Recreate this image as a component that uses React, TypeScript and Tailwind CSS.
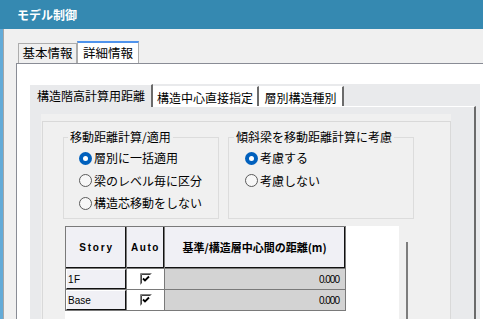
import React from "react";

function Radio({ checked, label, h }: { checked?: boolean; label: string; h: string }) {
  return (
    <div className={`flex items-center ${h}`}>
      {checked ? (
        <div className="w-[13px] h-[13px] rounded-full bg-[#0060bd] flex items-center justify-center shrink-0">
          <div className="w-[5px] h-[5px] rounded-full bg-white" />
        </div>
      ) : (
        <div className="w-[13px] h-[13px] rounded-full border border-[#5a5a5a] bg-[#f7f7f7] shrink-0" />
      )}
      <span className="ml-[2px] leading-[14px] whitespace-nowrap">{label}</span>
    </div>
  );
}

function Check() {
  return (
    <svg width="12" height="12" viewBox="0 0 12 12">
      <rect x="0" y="0" width="12" height="12" fill="#ffffff" />
      <path d="M0.5 11.5V0.5H11.5" stroke="#808080" fill="none" />
      <path d="M1.5 10.5V1.5H10.5" stroke="#404040" fill="none" />
      <path d="M3 5.5L5 7.5L9 3.5" stroke="#000" strokeWidth="1.8" fill="none" />
    </svg>
  );
}

export default function App() {
  return (
    <div className="w-[483px] h-[319px] overflow-hidden bg-[#f0f0f0] font-['Noto_Sans_CJK_JP',sans-serif] text-[12px] text-black">
      <div className="h-[29px] bg-[#3589b1] flex items-center pl-[17px] text-white font-bold text-[12px] leading-none">
        モデル制御
      </div>
      <div className="flex h-[290px]">
        <div className="w-[3px] bg-[#63abd8]" />
        <div className="w-px bg-[#a6a6a6]" />
        <div className="flex-1 flex flex-col pt-[12px] pl-[12px]">
          <div className="flex items-end h-[22px] pl-[2px]">
            <div className="h-[20px] w-[59px] border border-b-0 border-[#adadad] bg-[#f0f0f0] flex items-center justify-center leading-none text-[12.5px]">
              基本情報
            </div>
            <div className="h-[22px] w-[62px] border-x border-[#adadad] border-t-2 border-t-[#4f93ec] bg-white flex items-center justify-center leading-none text-[12.5px]">
              詳細情報
            </div>
          </div>
          <div className="flex-1 border-t border-l border-[#898c95] bg-white pt-[20px] pl-[13px] flex flex-col">
            <div className="w-[450px] flex-1 bg-[#e9eaec] flex flex-col">
              <div className="flex h-[22px] items-end">
                <div className="relative z-10 -mb-px h-[23px] w-[123px] bg-[#e9eaec] border-t border-white border-r-2 border-r-[#6b6b6b] pl-[7px] flex items-center leading-none">
                  構造階高計算用距離
                </div>
                <div className="h-[20px] w-[106px] bg-white border-t border-white border-r-2 border-r-[#6b6b6b] flex items-center justify-center leading-none pt-[2px]">
                  構造中心直接指定
                </div>
                <div className="h-[20px] w-[85px] bg-white border-t border-white border-r-2 border-r-[#6b6b6b] flex items-center justify-center leading-none pt-[2px]">
                  層別構造種別
                </div>
              </div>
              <div className="w-[446px] flex-1 border-t border-white border-r-2 border-r-[#6b6b6b] pt-[7px] pl-[11px] flex flex-col">
                <div className="w-[410px] flex-1 bg-[#f0f0f0] pt-[7px] pl-px flex flex-col">
                  <div className="flex-1 border-t border-l border-r border-[#d9d9d9] flex flex-col pl-[20px]">
                    <div className="flex gap-[9px] mt-[8px]">
                      <fieldset className="w-[156px] h-[89px] border border-[#dcdcdc] pl-[15px] pt-[3px] m-0">
                        <legend className="-ml-[11px] px-[2px] leading-[14px]">移動距離計算/適用</legend>
                        <Radio checked label="層別に一括適用" h="h-[22px]" />
                        <Radio label="梁のレベル毎に区分" h="h-[23px]" />
                        <Radio label="構造芯移動をしない" h="h-[22px]" />
                      </fieldset>
                      <fieldset className="w-[186px] h-[89px] border border-[#dcdcdc] pl-[16px] pt-[3px] m-0">
                        <legend className="-ml-[11px] px-[2px] leading-[14px]">傾斜梁を移動距離計算に考慮</legend>
                        <Radio checked label="考慮する" h="h-[22px]" />
                        <Radio label="考慮しない" h="h-[23px]" />
                      </fieldset>
                    </div>
                    <div className="flex flex-1 mt-[7px] ml-[2px]">
                      <div className="w-[334px] bg-white">
                        <div className="grid grid-cols-[60px_37px_180px] grid-rows-[41px_20px_20px] gap-px bg-[#7a7a7a] p-px w-fit">
                          <div className="bg-[#f0f0f5] border-r border-b border-[#111] flex items-center justify-center font-['Liberation_Sans',sans-serif] font-bold text-[10px] tracking-[1.8px] pl-[2px]">
                            Story
                          </div>
                          <div className="bg-[#f0f0f5] border-r border-b border-[#111] flex items-center justify-center font-['Liberation_Sans',sans-serif] font-bold text-[10px] tracking-[1.5px] pl-[1px]">
                            Auto
                          </div>
                          <div className="bg-[#f0f0f5] border-r border-b border-[#111] flex items-center justify-center font-bold text-[11px] leading-none">
                            基準/構造層中心間の距離(m)
                          </div>
                          <div className="bg-[#f0f0f5] border-t border-l border-white border-r border-r-[#111] border-b border-b-[#111] flex items-center pl-[1px] font-['Liberation_Sans',sans-serif] text-[10px] tracking-[0.5px]">
                            1F
                          </div>
                          <div className="bg-white flex items-center justify-center">
                            <Check />
                          </div>
                          <div className="bg-[#d3d3d3] flex items-center justify-end pr-[6px] font-['Liberation_Sans',sans-serif] text-[10px] tracking-[-1px]">
                            0.000
                          </div>
                          <div className="bg-[#f0f0f5] border-t border-l border-white border-r border-r-[#111] border-b border-b-[#111] flex items-center pl-[1px] font-['Liberation_Sans',sans-serif] text-[10px]">
                            Base
                          </div>
                          <div className="bg-white flex items-center justify-center">
                            <Check />
                          </div>
                          <div className="bg-[#d3d3d3] flex items-center justify-end pr-[6px] font-['Liberation_Sans',sans-serif] text-[10px] tracking-[-1px]">
                            0.000
                          </div>
                        </div>
                      </div>
                      <div className="ml-[7px] mt-[16px] w-[2px] bg-[#7d7d7d]" />
                    </div>
                  </div>
                </div>
              </div>
            </div>
          </div>
        </div>
      </div>
    </div>
  );
}
